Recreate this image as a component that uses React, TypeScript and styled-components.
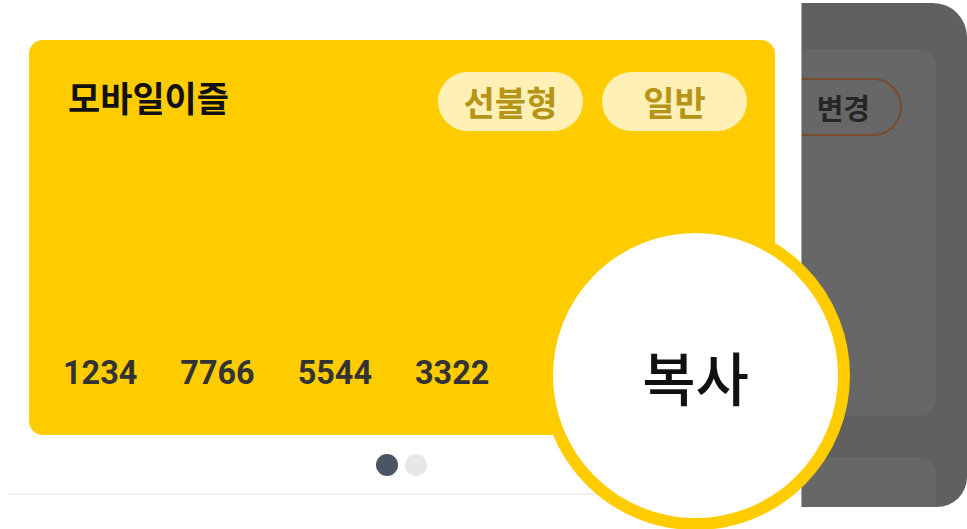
import React from "react";
import styled, { createGlobalStyle } from "styled-components";

const Global = createGlobalStyle`
  html, body { margin: 0; padding: 0; background: #ffffff; }
  body { overflow: hidden; font-family: "Noto Sans CJK KR", "Noto Sans", sans-serif; }
  * { box-sizing: border-box; }
`;

const Stage = styled.div`
  position: relative;
  width: 967px;
  height: 529px;
  display: flex;
  overflow: hidden;
  background: #ffffff;
`;

const Main = styled.section`
  width: 801px;
  flex: none;
  display: flex;
  flex-direction: column;
  padding: 40px 0 0 0;
`;

const Card = styled.div`
  margin-left: 29px;
  width: 746px;
  height: 395px;
  background: #ffcc00;
  border-radius: 14px;
  display: flex;
  flex-direction: column;
  justify-content: space-between;
  padding: 32px 28px 46px 39px;
`;

const Header = styled.div`
  display: flex;
  align-items: flex-start;
  justify-content: space-between;
`;

const Title = styled.h2`
  margin: 7px 0 0 0;
  font-family: "Noto Sans CJK KR", sans-serif;
  font-weight: 700;
  font-size: 35px;
  line-height: 1;
  color: #111111;
`;

const Chips = styled.div`
  display: flex;
  gap: 19px;
`;

const Chip = styled.span`
  width: 145px;
  height: 59px;
  border-radius: 30px;
  background: #fff0b5;
  color: #b5941a;
  display: flex;
  align-items: center;
  justify-content: center;
  font-family: "Noto Sans CJK KR", sans-serif;
  font-weight: 700;
  font-size: 34px;
  line-height: 1;
`;

const Number = styled.div`
  display: flex;
  gap: 43px;
  margin-left: -5px;
  font-family: Roboto, "Liberation Sans", sans-serif;
  font-weight: 700;
  font-size: 32.4px;
  line-height: 1;
  color: #333333;
`;

const DotRow = styled.div`
  display: flex;
  gap: 7px;
  margin-left: 376px;
  margin-top: 19px;
`;

const Dot = styled.span<{ $active?: boolean }>`
  width: 22px;
  height: 22px;
  border-radius: 50%;
  background: ${(p) => (p.$active ? "#4b5563" : "#e5e7eb")};
`;

const Divider = styled.hr`
  margin: 17px 0 0 8px;
  border: none;
  height: 2px;
  background: #eef0f3;
  width: 793px;
`;

const Side = styled.aside`
  flex: 1;
  margin-top: 3px;
  height: 504px;
  background: #606060;
  border-left: 1px solid #a8a8a8;
  border-radius: 0 34px 30px 0;
  overflow: hidden;
  display: flex;
  flex-direction: column;
  gap: 42px;
  padding-top: 47px;
`;

const SideCard = styled.div<{ $h: number }>`
  margin-left: -40px;
  width: 174px;
  height: ${(p) => p.$h}px;
  flex: none;
  background: #676767;
  border-radius: 16px;
  display: flex;
  justify-content: flex-end;
  align-items: flex-start;
  padding: 28px 34px 0 0;
`;

const ChangeButton = styled.span`
  width: 130px;
  height: 58px;
  border: 2px solid #7a4a2c;
  border-radius: 30px;
  display: flex;
  align-items: center;
  justify-content: flex-end;
  padding-right: 30px;
  font-family: "Noto Sans CJK KR", sans-serif;
  font-weight: 700;
  font-size: 29px;
  line-height: 1;
  color: #262626;
`;

const CopyBubble = styled.div`
  position: absolute;
  left: 541px;
  top: 221px;
  width: 309px;
  height: 309px;
  border-radius: 50%;
  background: #ffffff;
  border: 12px solid #ffcc00;
  display: flex;
  align-items: center;
  justify-content: center;
  font-family: "Noto Sans CJK KR", sans-serif;
  font-weight: 500;
  font-size: 58px;
  line-height: 1;
  color: #111111;
`;

export default function App() {
  const groups = ["1234", "7766", "5544", "3322"];
  return (
    <>
      <Global />
      <Stage>
        <Main>
          <Card>
            <Header>
              <Title>모바일이즐</Title>
              <Chips>
                <Chip>선불형</Chip>
                <Chip>일반</Chip>
              </Chips>
            </Header>
            <Number>
              {groups.map((g) => (
                <span key={g}>{g}</span>
              ))}
            </Number>
          </Card>
          <DotRow>
            <Dot $active />
            <Dot />
          </DotRow>
          <Divider />
        </Main>
        <Side>
          <SideCard $h={366}>
            <ChangeButton>변경</ChangeButton>
          </SideCard>
          <SideCard $h={120} />
        </Side>
        <CopyBubble>복사</CopyBubble>
      </Stage>
    </>
  );
}
